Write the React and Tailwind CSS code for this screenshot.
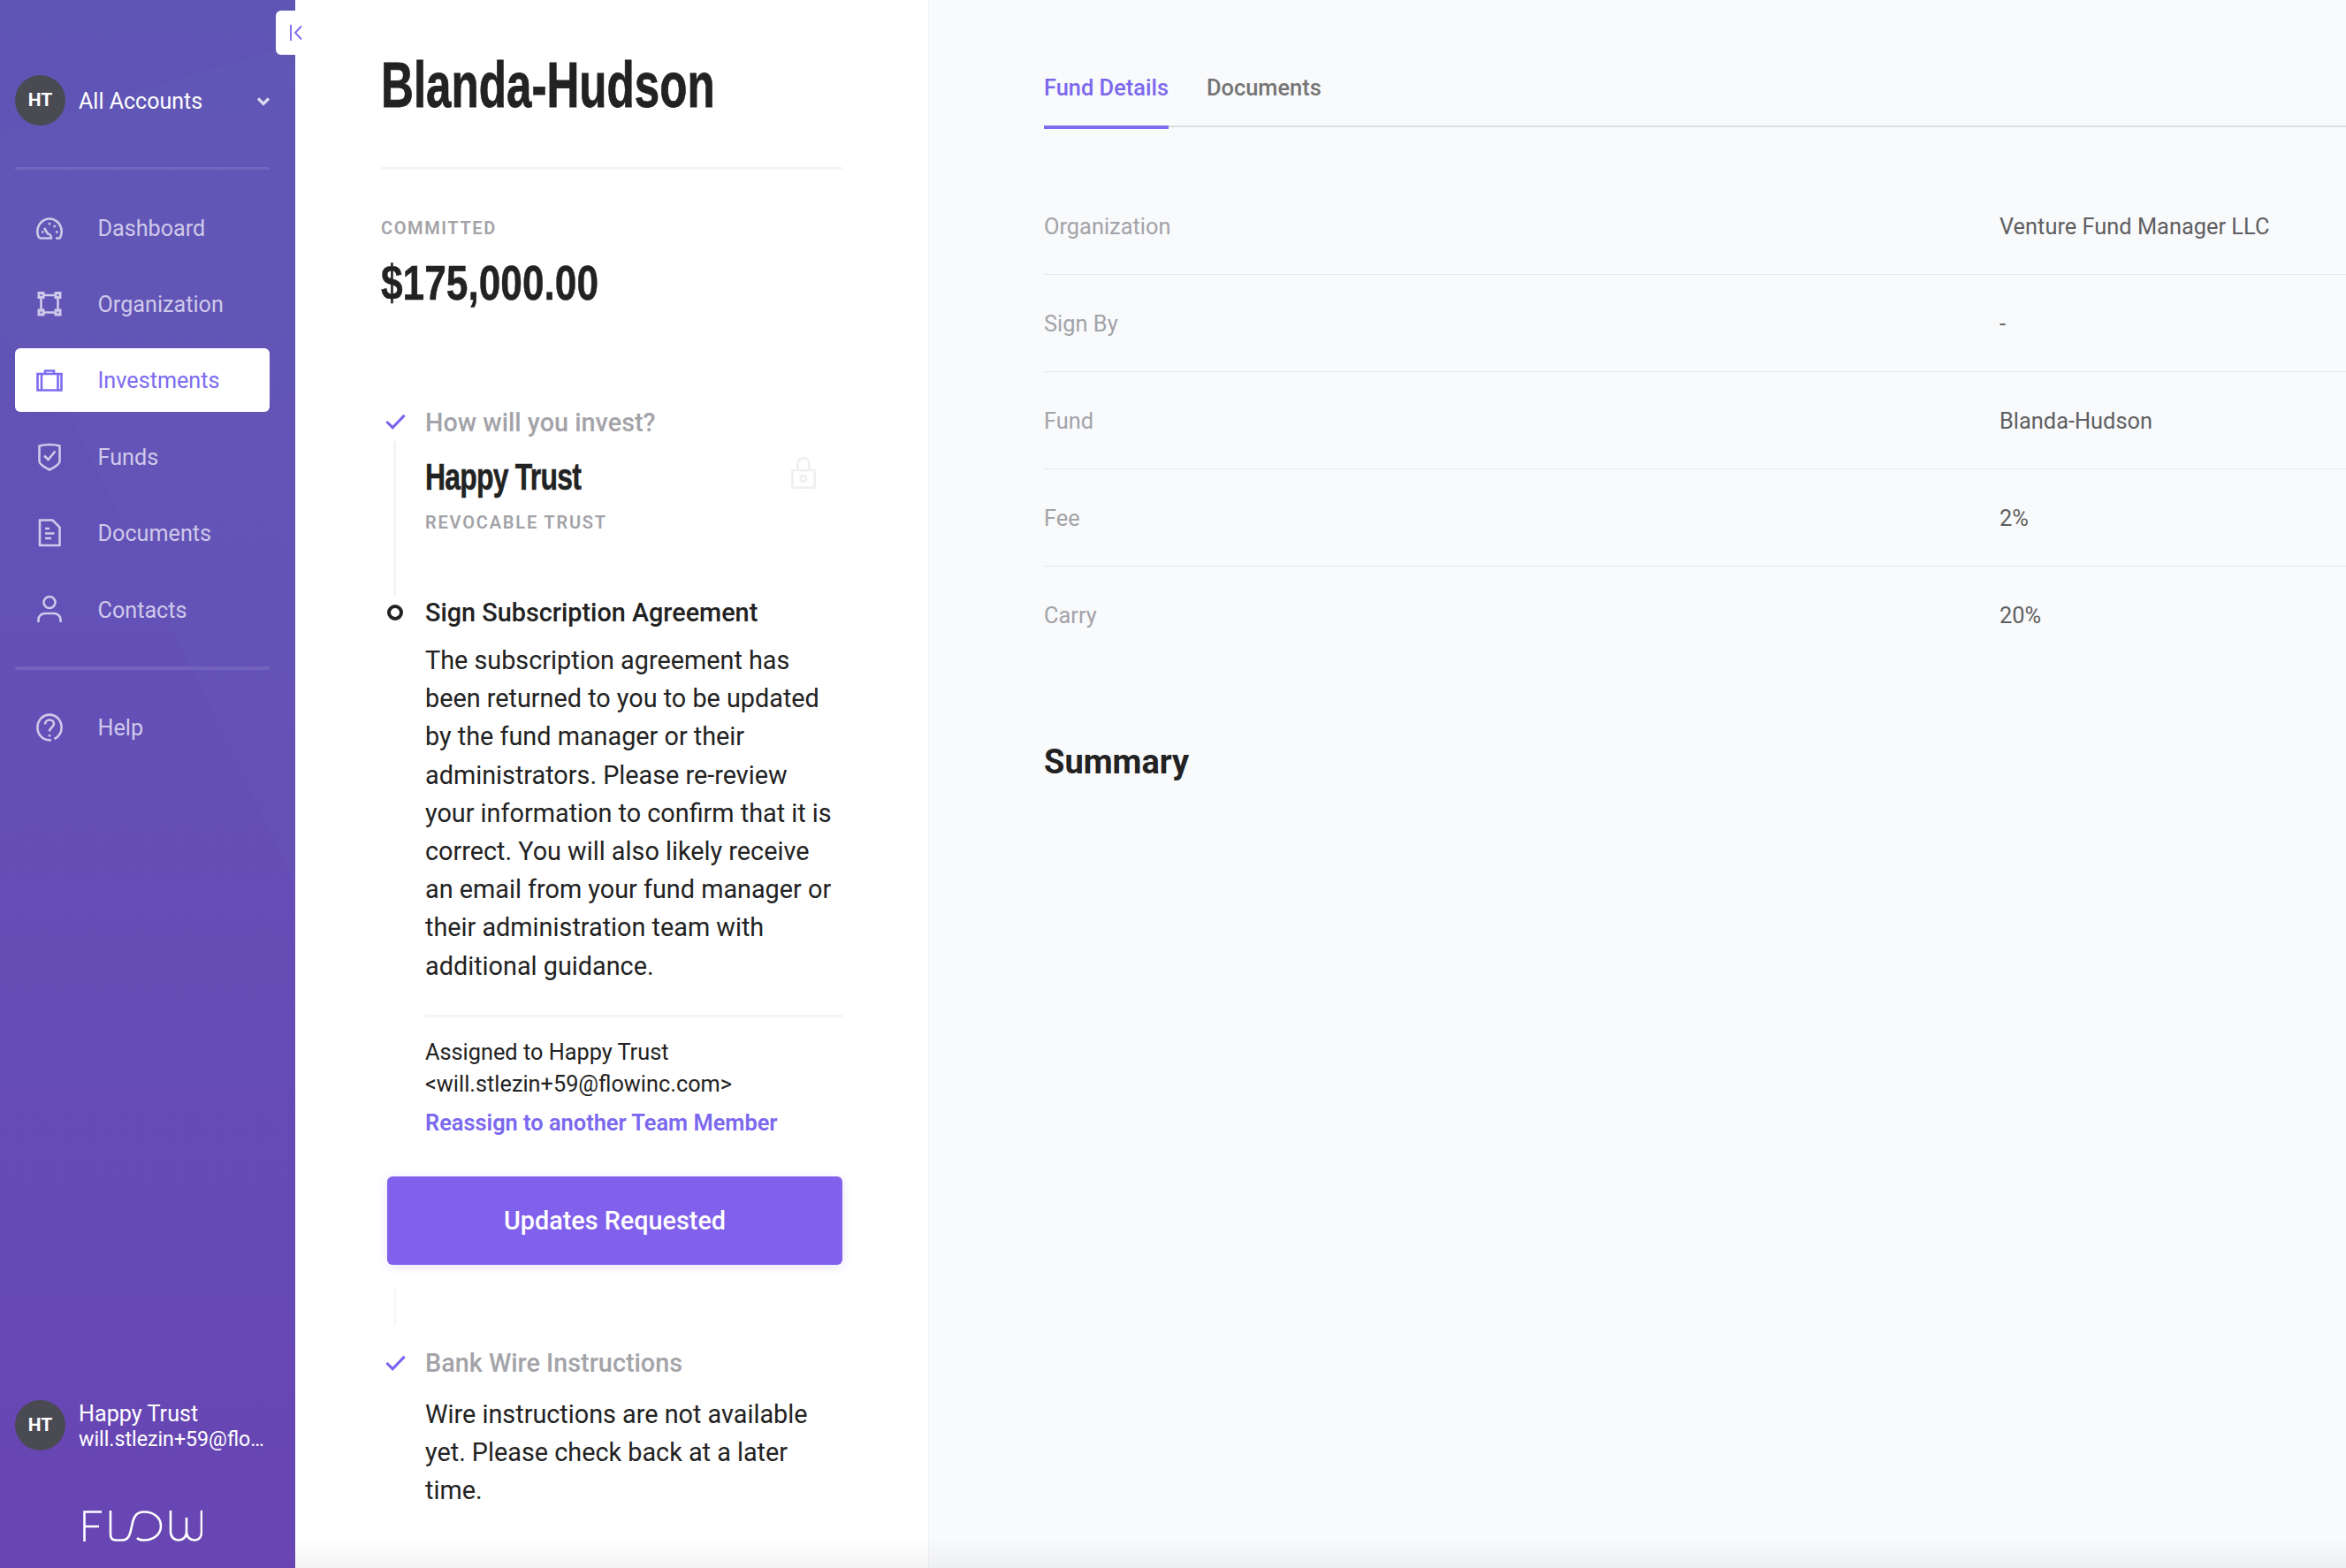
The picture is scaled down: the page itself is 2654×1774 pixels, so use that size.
const nav = [
  { label: "Dashboard", icon: "gauge" },
  { label: "Organization", icon: "org" },
  { label: "Investments", icon: "case", active: true },
  { label: "Funds", icon: "shield" },
  { label: "Documents", icon: "doc" },
  { label: "Contacts", icon: "user" },
];

function NavIcon({ name, className }) {
  const common = { viewBox: "0 0 30 32", fill: "none", stroke: "currentColor", strokeWidth: 2.6, className };
  if (name === "gauge")
    return (
      <svg {...common}>
        <path d="M3.500 27.500C2 25.500 1.300 22.500 1.300 20C1.300 12 7.500 5.500 15 5.500S28.700 12 28.700 20C28.700 22.500 28 25.500 26.500 27.500H22" />
        <path d="M3.500 27.500H17C17 24.500 15 22.500 13 22.500L9 16" />
        <path d="M15 10V12.500M21.500 13L20 15M6 20.500H8.500M24.500 20.500H22" />
      </svg>
    );
  if (name === "org")
    return (
      <svg {...common}>
        <rect x="3" y="3.500" width="5" height="5" strokeWidth="3" />
        <rect x="22" y="3.500" width="5" height="5" strokeWidth="3" />
        <rect x="3" y="23" width="5" height="5" strokeWidth="3" />
        <rect x="22" y="23" width="5" height="5" strokeWidth="3" />
        <path d="M8 6H22M5.500 8.500V23M24.500 8.500V23M8 25.500H22" />
      </svg>
    );
  if (name === "case")
    return (
      <svg {...common}>
        <path d="M10 9V5.500H20V9" />
        <path d="M1.500 9H28.500V27.500H1.500Z" />
        <path d="M6 9.500V27M24.500 9.500V27" />
      </svg>
    );
  if (name === "shield")
    return (
      <svg {...common}>
        <path d="M3.500 3.500C10 1.500 20 1.500 26.500 3.500V21C26.500 24 20 28 15 30.500C10 28 3.500 24 3.500 21Z" />
        <path d="M9 14.500L13.500 19L21.500 9.500" />
      </svg>
    );
  if (name === "doc")
    return (
      <svg {...common}>
        <path d="M4 1.500H18.500L26.500 9.500V30H4Z" />
        <path d="M10 11H15M10 16.500H20.500M10 22H17" />
      </svg>
    );
  if (name === "user")
    return (
      <svg {...common}>
        <circle cx="15" cy="8.500" r="6.500" />
        <path d="M2.500 31V28C2.500 24 6 21 10 21H20C24 21 27.500 24 27.500 28V31" />
      </svg>
    );
  return (
    <svg {...common}>
      <path d="M17 30.200C16.300 30.300 15.700 30.400 15 30.400C7.200 30.400 1.400 23.900 1.400 16S7.200 1.600 15 1.600S28.600 8.100 28.600 16C28.600 21.500 25.500 26.500 20.500 29" />
      <path d="M10 12.500C10 9.500 12.500 7.500 15 7.500C18 7.500 20 9.500 20 12C20 15.500 15 16 15 20.500" />
      <path d="M15 24V26.500" />
    </svg>
  );
}

function Avatar() {
  return (
    <div className="w-[57px] h-[57px] shrink-0 rounded-full bg-[#4a4a52] flex items-center justify-center pt-[2px] text-white text-[21px] font-bold">
      HT
    </div>
  );
}

function Check() {
  return (
    <svg viewBox="0 0 24 18" fill="none" stroke="#7b64ee" strokeWidth="3.200" className="w-[23px] h-[18px]">
      <path d="M1.500 9L8.500 16L22.500 1.500" />
    </svg>
  );
}

function Sidebar() {
  return (
    <aside className="relative isolate w-[334px] shrink-0 h-full flex flex-col bg-[linear-gradient(180deg,#5f55b5_0%,#6351b7_40%,#6845b3_100%)] px-[17px] pr-[29px] pt-[84px] pb-[30px]">
      <svg viewBox="0 0 334 1774" className="absolute inset-0 w-full h-full -z-10" fill="#fff">
        <polygon points="0,150 334,50 334,1000 80,470 0,380" opacity="0.012" />
      </svg>
      <button className="absolute left-[312px] top-[12px] w-[32px] h-[50px] bg-white rounded-l-[6px] z-10 flex items-center pl-[16px]">
        <svg viewBox="0 0 14 18" fill="none" stroke="#8070ee" strokeWidth="2" className="w-[14px] h-[18px]">
          <path d="M1 0V18M13 1.500L6 9L13 16.500" />
        </svg>
      </button>
      <div className="flex items-center h-[58px]">
        <Avatar />
        <span className="ml-[15px] pt-[3px] text-white text-[25px] leading-none flex-1">All Accounts</span>
        <svg viewBox="0 0 14 10" fill="none" stroke="#dedbf0" strokeWidth="3.200" className="w-[14px] h-[10px] mt-[3px]">
          <path d="M1 1.500L7 7.500L13 1.500" />
        </svg>
      </div>
      <div className="mt-[47px] h-[3px] rounded-sm bg-white/10" />
      <nav className="mt-[29.5px] flex flex-col gap-[14.4px]">
        {nav.map((n) => (
          <a
            key={n.label}
            className={
              n.active
                ? "h-[72px] flex items-center pl-[24px] rounded-[6px] bg-white text-[#7d6cf0] text-[25.2px]"
                : "h-[72px] flex items-center pl-[24px] rounded-[6px] text-[#cfc9ea] text-[25.2px]"
            }
          >
            <NavIcon name={n.icon} className="w-[30px] h-[32px]" />
            <span className="ml-[39.5px] pt-[2px]">{n.label}</span>
          </a>
        ))}
      </nav>
      <div className="mt-[28.5px] h-[4px] rounded-sm bg-white/10" />
      <a className="mt-[29px] h-[72px] flex items-center pl-[24px] text-[#cfc9ea] text-[25.2px]">
        <NavIcon name="help" className="w-[30px] h-[32px]" />
        <span className="ml-[39.5px] pt-[2px]">Help</span>
      </a>
      <div className="mt-auto flex items-center">
        <Avatar />
        <div className="ml-[15px] min-w-0 flex-1 pt-[3px] text-white whitespace-nowrap">
          <div className="text-[25.2px] leading-[29px]">Happy Trust</div>
          <div className="text-[23.2px] leading-[29px]">will.stlezin+59@flo…</div>
        </div>
      </div>
      <div className="mt-[66.5px] flex justify-center">
        <svg viewBox="0 0 135 35" fill="none" stroke="#fff" strokeWidth="2.600" className="w-[135px] h-[35px] ml-[1px]">
          <path d="M1.500 35V1.500H21M1.500 18H18" />
          <path d="M31 0V27Q31 33.500 37 33.500H44C52 33.500 53 27 55 18C57 7 60 1.500 69 1.500C80 1.500 88 8 88 17.500C88 27 80 33.500 69 33.500C65 33.500 63 33 61 31" />
          <path d="M99 0V24C99 30 103 33.500 108 33.500C113 33.500 117 30 117 24V8V24C117 30 121 33.500 126 33.500C131 33.500 134 30 134 24V0" />
        </svg>
      </div>
    </aside>
  );
}

function Middle() {
  return (
    <section className="w-[717px] shrink-0 h-full bg-white border-r border-[#f2f2f4] pl-[97px] pr-[97px] pt-[56px] overflow-hidden">
      <h1 className="font-['Liberation_Sans',sans-serif] font-bold text-[#222] [-webkit-text-stroke:0.8px_#222] whitespace-nowrap origin-left scale-x-[0.71] text-[72px] leading-[80px]">
        Blanda-Hudson
      </h1>
      <div className="mt-[53px] h-[3px] bg-[#f4f4f5]" />
      <div className="mt-[53px] pt-[1px] text-[20px] leading-[24px] font-semibold tracking-[1.600px] text-[#a3a3a8]">COMMITTED</div>
      <div className="mt-[20px] font-['Liberation_Sans',sans-serif] font-bold text-[#222] [-webkit-text-stroke:0.5px_#222] whitespace-nowrap origin-left scale-x-[0.79] text-[56px] leading-[60px]">
        $175,000.00
      </div>

      <div className="mt-[108px] flex gap-[18px]">
        <div className="w-[32px] shrink-0 flex flex-col items-center">
          <div className="h-[41px] flex items-center pb-[3px]"><Check /></div>
          <div className="w-[3px] -ml-[1px] flex-1 bg-[#f4f4f5]" />
        </div>
        <div className="flex-1 pb-[72px]">
          <div className="text-[28.8px] leading-[40px] font-medium text-[#a3a3a8]">How will you invest?</div>
          <div className="mt-[18px] flex justify-between pr-[30px]">
            <div className="font-['Liberation_Sans',sans-serif] font-bold text-[#222] [-webkit-text-stroke:0.5px_#222] whitespace-nowrap origin-left scale-x-[0.76] tracking-[-1px] text-[42px] leading-[48px]">
              Happy Trust
            </div>
            <svg viewBox="0 0 28 36" fill="none" stroke="#efeff0" strokeWidth="2.600" className="w-[28px] h-[36px] mt-[1px] shrink-0">
              <rect x="1.300" y="15" width="25.400" height="19.700" rx="1" />
              <path d="M7.500 15V8C7.500 4 10 1.300 14 1.300S20.500 4 20.500 8V15" />
              <circle cx="14" cy="24.500" r="3.200" />
            </svg>
          </div>
          <div className="mt-[15px] text-[20px] leading-[24px] font-semibold tracking-[1.800px] text-[#a3a3a8]">REVOCABLE TRUST</div>
        </div>
      </div>

      <div className="flex gap-[18px]">
        <div className="w-[32px] shrink-0 flex justify-center pt-[9px]">
          <div className="w-[18px] h-[18px] rounded-full border-[4px] border-[#222]" />
        </div>
        <div className="flex-1">
          <div className="text-[28.8px] leading-[36px] font-medium text-[#222]">Sign Subscription Agreement</div>
          <p className="mt-[15px] pr-[6px] text-[28.8px] leading-[43.2px] text-[#222]">
            The subscription agreement has been returned to you to be updated by the fund manager or their administrators. Please re-review your information to confirm that it is correct. You will also likely receive an email from your fund manager or their administration team with additional guidance.
          </p>
          <div className="mt-[33px] h-[3px] bg-[#f4f4f5]" />
          <div className="mt-[22px] text-[25.3px] leading-[36px] text-[#222]">
            Assigned to Happy Trust
            <br />
            {"<will.stlezin+59@flowinc.com>"}
          </div>
          <a className="mt-[7px] block text-[25.4px] leading-[36px] font-semibold text-[#7b68ee]">Reassign to another Team Member</a>
        </div>
      </div>

      <button className="mt-[43px] ml-[7px] w-[515px] h-[100px] rounded-[6px] bg-[#8160ec] pt-[2px] shadow-[0_2px_12px_rgba(129,96,236,0.18)] text-white text-[28.8px] font-medium">
        Updates Requested
      </button>
      <div className="mt-[25px] ml-[15px] w-[2px] h-[43px] bg-[#f6f6f7]" />

      <div className="mt-[23px] flex gap-[18px]">
        <div className="w-[32px] shrink-0 flex justify-center h-[40px] items-center"><Check /></div>
        <div className="flex-1">
          <div className="text-[28.8px] leading-[40px] font-medium text-[#a3a3a8]">Bank Wire Instructions</div>
          <p className="mt-[17px] text-[28.8px] leading-[43.2px] text-[#222]">
            Wire instructions are not available yet. Please check back at a later time.
          </p>
        </div>
      </div>
    </section>
  );
}

const rows = [
  ["Organization", "Venture Fund Manager LLC"],
  ["Sign By", "-"],
  ["Fund", "Blanda-Hudson"],
  ["Fee", "2%"],
  ["Carry", "20%"],
];

function Right() {
  return (
    <main className="flex-1 h-full bg-[#f9fafc] pl-[130px] overflow-hidden">
      <div className="h-[144px] flex gap-[43px] border-b-2 border-[#dcdde0] text-[25.4px] font-medium pt-[80px]">
        <div className="h-[66px] w-[141px] text-center whitespace-nowrap border-b-4 border-[#7f6ced] text-[#7b68ee] leading-[38px]">Fund Details</div>
        <div className="text-[#757575] leading-[38px]">Documents</div>
      </div>
      <div className="mt-[57px] text-[25.4px]">
        {rows.map(([k, v], i) => (
          <div key={k} className={i < 4 ? "h-[110px] flex items-center pt-[2px] border-b border-[#e6e6e9]" : "h-[110px] flex items-center"}>
            <div className="w-[1081px] shrink-0 text-[#a3a3a8]">{k}</div>
            <div className="text-[#5f5f62]">{v}</div>
          </div>
        ))}
      </div>
      <h2 className="mt-[83px] text-[38px] leading-[56px] font-bold text-[#222]">Summary</h2>
    </main>
  );
}

export default function App() {
  return (
    <div className="relative w-[2654px] h-[1774px] flex overflow-hidden font-['Roboto',sans-serif] bg-white">
      <Sidebar />
      <Middle />
      <Right />
      <div className="absolute left-[334px] right-0 bottom-0 h-[34px] bg-[linear-gradient(180deg,rgba(0,0,0,0)_0%,rgba(0,0,0,0.045)_100%)]" />
    </div>
  );
}
